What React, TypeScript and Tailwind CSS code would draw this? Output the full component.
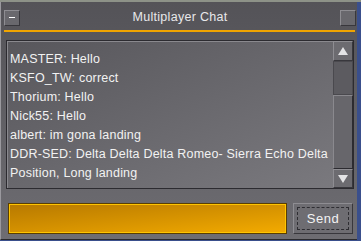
const lines = [
  'MASTER: Hello',
  'KSFO_TW: correct',
  'Thorium: Hello',
  'Nick55: Hello',
  'albert: im gona landing',
  'DDR-SED: Delta Delta Delta Romeo- Sierra Echo Delta',
  'Position, Long landing',
];

function Bevel({ className = '', children }: { className?: string; children?: React.ReactNode }) {
  return (
    <div
      className={`border border-t-[#8e8d92] border-l-[#8e8d92] border-r-[#38373c] border-b-[#38373c] bg-[#6c6b70] ${className}`}
    >
      {children}
    </div>
  );
}

export default function App() {
  return (
    <div
      className="flex h-[241px] w-[361px] flex-col overflow-hidden bg-[#3a4f8c]"
      style={{ fontFamily: '"Liberation Sans", Arial, sans-serif' }}
    >
      <div className="h-[2px] w-full shrink-0 bg-[#8d9288]" />
      <div className="flex h-[238px] w-[357px] flex-col border-l border-b border-l-[#9a999e] border-b-[#2a2a2e] bg-gradient-to-b from-[#545358] to-[#6e6d72] pl-[3px]">
        {/* title bar */}
        <div className="flex h-[28px] items-center pt-[3px] pr-[1px]">
          <Bevel className="flex h-[16px] w-[16px] items-center justify-center bg-[#69686d]">
            <div className="h-[1px] w-[6px] bg-white" />
          </Bevel>
          <div className="flex-1 text-center text-[12.5px] tracking-[0.3px] text-[#e8e8ea]">Multiplayer Chat</div>
          <Bevel className="h-[16px] w-[16px] bg-[#69686d]" />
        </div>
        <div className="h-[2px] w-[351px] bg-[#f0a400]" />

        {/* chat panel */}
        <div className="ml-[2px] mt-[8px] flex h-[149px] w-[348px] border border-t-[#2c2b30] border-l-[#2c2b30] border-b-[#2c2b30] border-r-[#2c2b30]">
          <div className="flex flex-1 flex-col border-t border-l border-t-[#8a898e] border-l-[#8a898e] bg-gradient-to-br from-[#58575c] to-[#7a797e] pl-[2px] pt-[8px]">
            {lines.map((l) => (
              <div key={l} className="h-[19px] whitespace-nowrap text-[12.5px] leading-[19px] tracking-[0.2px] text-[#f2f2f2]">
                {l}
              </div>
            ))}
          </div>
          <div className="flex w-[20px] flex-col bg-[#5f5e63]">
            <Bevel className="flex h-[20px] w-[20px] items-center justify-center">
              <div className="h-0 w-0 border-x-[5px] border-b-[8px] border-x-transparent border-b-[#e4e4e6]" />
            </Bevel>
            <div className="flex flex-1 flex-col">
              <div className="h-[34px] w-[20px] border border-[#4a494e] bg-[#5c5b60]" />
              <div className="flex-1 border border-t-[#8a898e] border-l-[#8a898e] border-r-[#2c2b30] border-b-[#2c2b30] bg-[#67666b]" />
            </div>
            <Bevel className="flex h-[19px] w-[20px] items-center justify-center">
              <div className="h-0 w-0 border-x-[5px] border-t-[8px] border-x-transparent border-t-[#e4e4e6]" />
            </Bevel>
          </div>
        </div>

        {/* input row */}
        <div className="mt-[14px] flex items-center">
          <div className="ml-[4px] h-[31px] w-[279px] border border-[#5a3e00] p-0">
            <div className="h-full w-full border border-[#ffc400] bg-gradient-to-br from-[#b87a00] to-[#f2aa00]" />
          </div>
          <Bevel className="ml-[6px] flex h-[31px] w-[60px] items-center justify-center p-[3px] bg-[#6e6d72]">
            <div className="flex h-full w-full items-center justify-center border border-dashed border-[#2e2d32] text-[13px] tracking-[0.5px] text-[#f2f2f2]">
              Send
            </div>
          </Bevel>
        </div>
      </div>
    </div>
  );
}
